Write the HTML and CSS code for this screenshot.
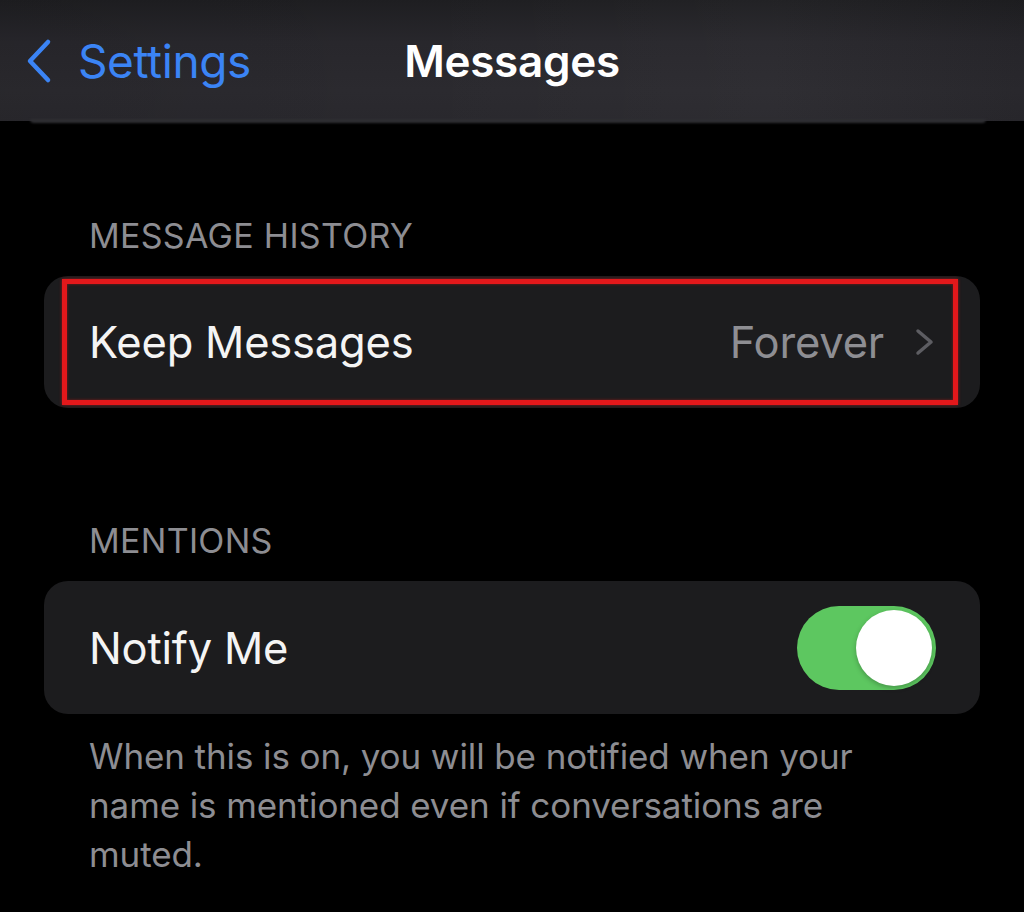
FILE: index.html
```html
<!DOCTYPE html>
<html lang="en">
<head>
<meta charset="utf-8">
<title>Messages</title>
<link rel="stylesheet" href="styles.css">
</head>
<body>
<div class="screen">
  <header class="navbar">
    <div class="nav-left">
      <svg class="back-icon" viewBox="0 0 30 46" width="30" height="46"><path d="M24 4 L6 23 L24 42" fill="none" stroke="#3b84f5" stroke-width="4.5" stroke-linecap="round" stroke-linejoin="round"/></svg>
      <span class="back-label">Settings</span>
    </div>
    <div class="nav-title">Messages</div>
    <div class="nav-right"></div>
  </header>

  <section class="group group-history">
    <div class="group-label">MESSAGE HISTORY</div>
    <div class="card">
      <div class="row">
        <span class="row-title">Keep Messages</span>
        <span class="row-value">Forever</span>
        <svg class="chevron" viewBox="0 0 22 28" width="22" height="28"><path d="M4 3 L17 14 L4 25" fill="none" stroke="#5d5d62" stroke-width="3.5" stroke-linecap="round" stroke-linejoin="round"/></svg>
      </div>
      <div class="highlight"></div>
    </div>
  </section>

  <section class="group group-mentions">
    <div class="group-label">MENTIONS</div>
    <div class="card">
      <div class="row">
        <span class="row-title">Notify Me</span>
        <span class="toggle"><span class="knob"></span></span>
      </div>
    </div>
    <p class="group-footer">When this is on, you will be notified when your name is mentioned even if conversations are muted.</p>
  </section>
</div>
</body>
</html>
```

FILE: styles.css
```css
* { box-sizing: border-box; }
html, body {
  margin: 0;
  padding: 0;
  background: #000;
}
body {
  width: 1024px;
  height: 912px;
  overflow: hidden;
  font-family: Inter, "Liberation Sans", Arial, sans-serif;
  color: #fff;
}
.screen {
  width: 1024px;
  height: 912px;
  background: #000;
}
.navbar {
  position: relative;
  height: 121px;
  display: grid;
  grid-template-columns: 1fr auto 1fr;
  align-items: center;
  background:
    linear-gradient(90deg, rgba(0,0,0,0.06) 0%, rgba(0,0,0,0) 40%, rgba(255,255,255,0.02) 75%, rgba(0,0,0,0.05) 100%),
    linear-gradient(180deg, #1e1e21 0%, #28272c 35%, #2b2a2f 75%, #29282d 100%);
}
.navbar::after {
  content: "";
  position: absolute;
  left: 30px;
  right: 38px;
  bottom: -2px;
  height: 4px;
  border-radius: 0 0 8px 8px;
  background: #2e2e32;
  filter: blur(1px);
}
.nav-left {
  display: flex;
  align-items: center;
  padding-left: 24px;
  gap: 24px;
}
.back-icon { display: block; }
.back-label {
  color: #3b84f5;
  font-size: 46px;
  letter-spacing: -0.4px;
}
.nav-title {
  font-size: 44px;
  font-weight: 600;
  letter-spacing: -0.3px;
  color: #fff;
}
.group {
  padding: 0 44px;
}
.group-history { margin-top: 93px; }
.group-mentions { margin-top: 111px; }
.group-label {
  padding-left: 45px;
  height: 44px;
  line-height: 44px;
  font-size: 34px;
  color: #8d8d92;
  letter-spacing: 0.3px;
  margin-bottom: 18px;
}
.card {
  position: relative;
  background: #1c1c1e;
  border-radius: 24px;
}
.group-history .card { height: 132px; }
.group-mentions .card { height: 133px; }
.row {
  height: 100%;
  display: flex;
  align-items: center;
  padding: 0 44px 0 45px;
}
.row-title {
  flex: 1;
  font-size: 43.5px;
  letter-spacing: -0.2px;
  color: #f4f4f4;
}
.row-value {
  font-size: 43.5px;
  color: #8e8e93;
  margin-right: 30px;
  letter-spacing: -0.2px;
}
.chevron { display: block; }
.highlight {
  position: absolute;
  left: 18px;
  right: 22px;
  top: 3px;
  bottom: 3px;
  border: 5px solid #e3181b;
  box-shadow: 0 0 3px rgba(227,24,27,0.6), inset 0 0 3px rgba(227,24,27,0.5);
  pointer-events: none;
}
.toggle {
  position: relative;
  width: 139px;
  height: 84px;
  border-radius: 42px;
  background: #5dc760;
  flex: none;
}
.knob {
  position: absolute;
  right: 4px;
  top: 4px;
  width: 76px;
  height: 76px;
  border-radius: 50%;
  background: #fff;
  box-shadow: 0 2px 5px rgba(0,0,0,0.25);
}
.group-footer {
  margin: 18px 0 0;
  padding: 0 0 0 45px;
  max-width: 850px;
  font-size: 35px;
  line-height: 49px;
  color: #8d8d92;
  letter-spacing: -0.1px;
}
```
